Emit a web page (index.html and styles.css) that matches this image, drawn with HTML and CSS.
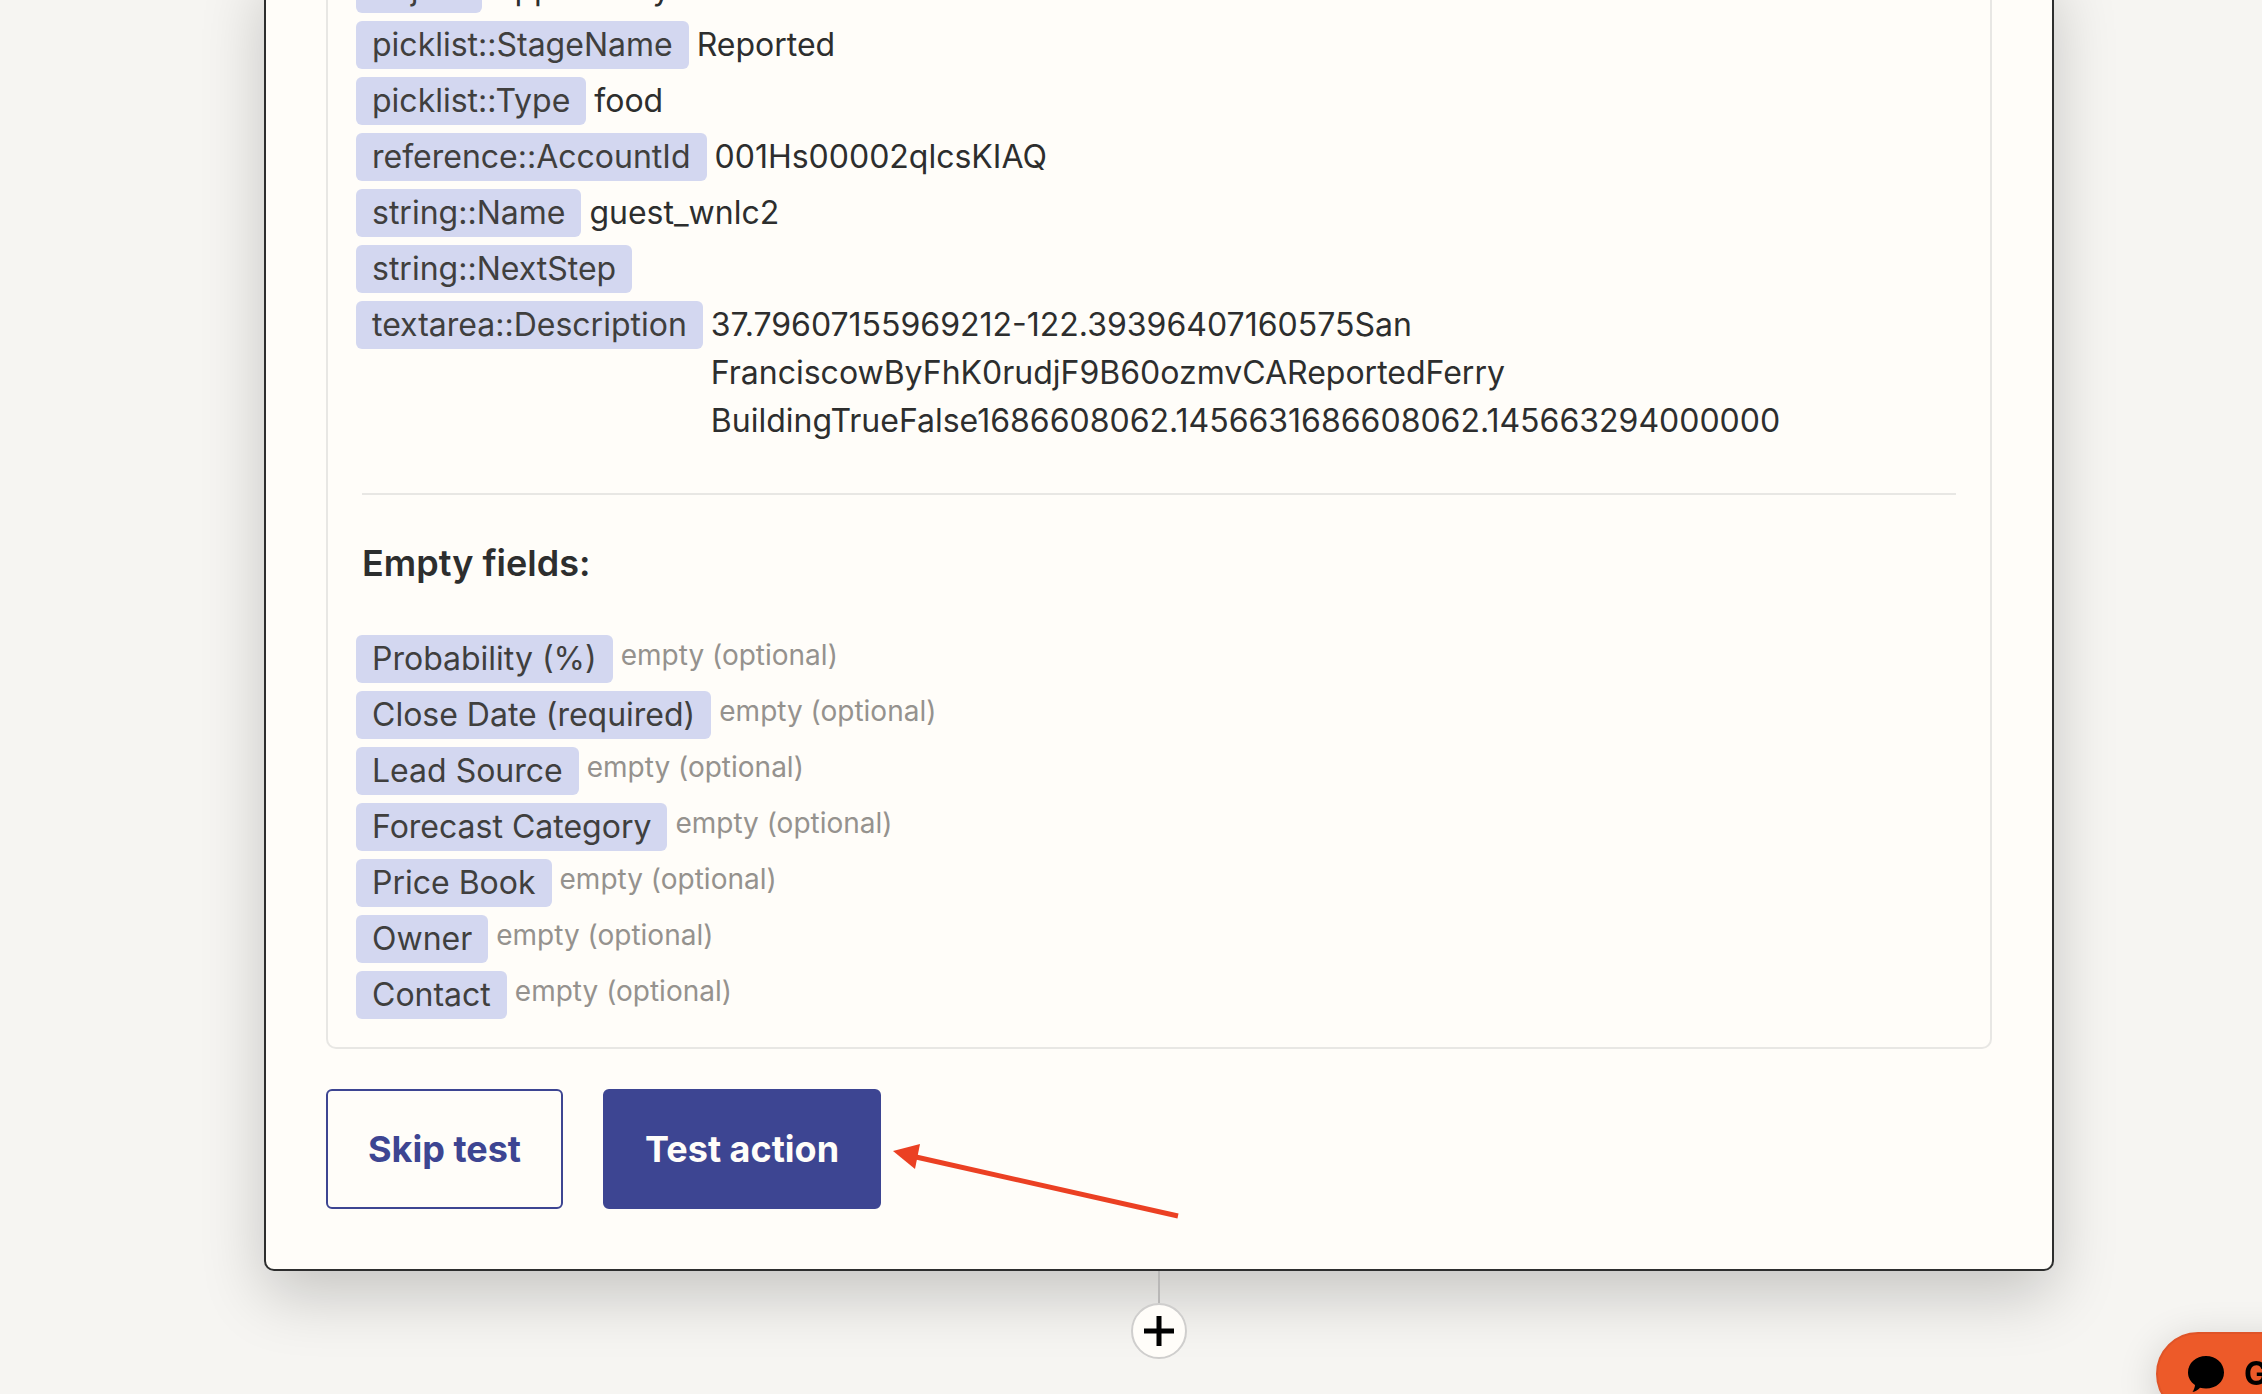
FILE: index.html
```html
<!DOCTYPE html>
<html lang="en">
<head>
<meta charset="utf-8">
<title>Test action</title>
<link rel="stylesheet" href="styles.css">
</head>
<body>
<main class="canvas">
  <section class="card">
    <div class="panel">
      <dl class="fields">
        <div class="field"><dt class="tag">object</dt><dd class="value">Opportunity</dd></div>
        <div class="field"><dt class="tag">picklist::StageName</dt><dd class="value">Reported</dd></div>
        <div class="field"><dt class="tag">picklist::Type</dt><dd class="value">food</dd></div>
        <div class="field"><dt class="tag">reference::AccountId</dt><dd class="value">001Hs00002qlcsKIAQ</dd></div>
        <div class="field"><dt class="tag">string::Name</dt><dd class="value">guest_wnlc2</dd></div>
        <div class="field"><dt class="tag">string::NextStep</dt><dd class="value"></dd></div>
        <div class="field"><dt class="tag">textarea::Description</dt><dd class="value">37.79607155969212-122.39396407160575San FranciscowByFhK0rudjF9B60ozmvCAReportedFerry BuildingTrueFalse1686608062.1456631686608062.145663294000000</dd></div>
      </dl>
      <hr class="divider">
      <h2 class="heading">Empty fields:</h2>
      <dl class="fields">
        <div class="field"><dt class="tag">Probability (%)</dt><dd class="empty">empty (optional)</dd></div>
        <div class="field"><dt class="tag">Close Date (required)</dt><dd class="empty">empty (optional)</dd></div>
        <div class="field"><dt class="tag">Lead Source</dt><dd class="empty">empty (optional)</dd></div>
        <div class="field"><dt class="tag">Forecast Category</dt><dd class="empty">empty (optional)</dd></div>
        <div class="field"><dt class="tag">Price Book</dt><dd class="empty">empty (optional)</dd></div>
        <div class="field"><dt class="tag">Owner</dt><dd class="empty">empty (optional)</dd></div>
        <div class="field"><dt class="tag">Contact</dt><dd class="empty">empty (optional)</dd></div>
      </dl>
    </div>
    <div class="actions">
      <button class="btn" type="button">Skip test</button>
      <div class="callout">
        <button class="btn btn-primary" type="button">Test action</button>
        <svg class="arrow" width="300" height="84" viewBox="0 0 300 84" aria-hidden="true">
          <path d="M24 16 L286 75" stroke="#eb4023" stroke-width="5" fill="none"/>
          <path d="M1 10 L28 3 L23 28 Z" fill="#eb4023"/>
        </svg>
      </div>
    </div>
  </section>
  <div class="connector"></div>
  <button class="add" type="button" aria-label="+">
    <svg width="32" height="32" viewBox="0 0 32 32" aria-hidden="true"><path d="M16 1V31M1 16H31" stroke="#000" stroke-width="5"/></svg>
  </button>
</main>
<button class="chat" type="button">
  <svg width="36" height="36" viewBox="0 0 36 36" aria-hidden="true"><path d="M18 0C28 0 36 7 36 16.500C36 26 28 32.500 18 32.500C16 32.500 14 32.200 12 31.700C10 33.800 7.500 35.400 4.500 36C6 33.500 7 31 7 29C2.500 26 0 21.500 0 16.500C0 7 8 0 18 0Z"/></svg>
  <span>G</span>
</button>
</body>
</html>
```

FILE: styles.css
```css
* {
  box-sizing: border-box;
}

body {
  margin: 0;
  min-height: 100vh;
  overflow: hidden;
  background: #f6f5f2;
  color: #2d2e2e;
  font-family: Inter, "Liberation Sans", sans-serif;
  font-size: 32px;
  line-height: 48px;
}

.canvas {
  display: flex;
  flex-direction: column;
  align-items: center;
  padding: 0 208px 0 264px;
}

/* The card is scrolled so that its first rows lie above the window. */
.card {
  align-self: stretch;
  margin-top: -35px;
  padding: 0 60px 60px;
  border: 2px solid #2d2e2e;
  border-top: 0;
  border-radius: 0 0 10px 10px;
  background: #fffdf9;
  box-shadow: 0 24px 64px rgba(0, 0, 0, 0.2);
}

.panel {
  padding: 0 34px 28px;
  border: 2px solid #e8e7e4;
  border-top: 0;
  border-radius: 0 0 10px 10px;
}

.fields {
  display: flex;
  flex-direction: column;
  gap: 8px;
  margin: 0 0 0 -6px;
}

.field {
  display: flex;
  align-items: flex-start;
  gap: 8px;
}

.tag {
  flex: none;
  padding: 0 16px;
  border-radius: 6px;
  background: #d3d7f0;
  color: #403f3e;
}

.value,
.empty {
  margin: 0;
}

.empty {
  color: #95928e;
  font-size: 28px;
  line-height: 40px;
}

.divider {
  height: 2px;
  margin: 48px 0;
  border: 0;
  background: #e8e7e4;
}

.heading {
  margin: 0 0 52px;
  font-size: 36px;
  font-weight: 600;
  line-height: 40px;
}

.actions {
  display: flex;
  gap: 40px;
  margin-top: 40px;
}

.btn {
  height: 120px;
  padding: 0 40px;
  border: 2px solid #3d4592;
  border-radius: 6px;
  background: #fffdf9;
  color: #3d4592;
  font: 700 36px/44px Inter, "Liberation Sans", sans-serif;
}

.btn-primary {
  background: #3d4592;
  color: #fffdf9;
}

.callout {
  position: relative;
}

.arrow {
  position: absolute;
  top: 52px;
  left: calc(100% + 11px);
}

.connector {
  width: 2px;
  height: 32px;
  background: #b9b8b7;
}

.add {
  display: grid;
  place-items: center;
  width: 56px;
  height: 56px;
  padding: 0;
  border: 2px solid #cfcecd;
  border-radius: 50%;
  background: #fffdf9;
}

/* Help launcher, partly beyond the window's corner. */
.chat {
  position: fixed;
  top: 1332px;
  left: calc(100% - 106px);
  display: flex;
  align-items: center;
  gap: 20px;
  width: 240px;
  height: 84px;
  padding: 0 30px;
  border: 2px solid #df5428;
  border-radius: 42px;
  background: #ed5a29;
  color: #000;
  font: 700 32px/40px Inter, "Liberation Sans", sans-serif;
  box-shadow: 0 8px 40px rgba(0, 0, 0, 0.16);
}
```
